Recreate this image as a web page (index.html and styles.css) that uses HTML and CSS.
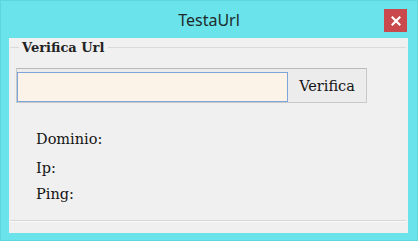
FILE: index.html
```html
<!DOCTYPE html>
<html lang="it">
<head>
  <meta charset="UTF-8" />
  <title>TestaUrl</title>
  <link rel="stylesheet" href="styles.css">
</head>
<body>
  <div class="window">
    <div class="titlebar">
      <span></span>
      <span class="title">TestaUrl</span>
      <button class="close-btn" title="Chiudi">
        <svg width="10" height="10" viewBox="0 0 10 10">
          <path d="M1.5 1.5 L8.5 8.5 M8.5 1.5 L1.5 8.5" stroke="#fff" stroke-width="2.2" stroke-linecap="square" />
        </svg>
      </button>
    </div>

    <div class="client">
      <fieldset class="groupbox">
        <legend>Verifica Url</legend>

        <div class="url-row">
          <input type="text" class="url-input" />
          <button class="check-btn">Verifica</button>
        </div>

        <div class="results">
          <div class="result dominio">Dominio:</div>
          <div class="result ip">Ip:</div>
          <div class="result ping">Ping:</div>
        </div>
      </fieldset>
    </div>
  </div>
</body>
</html>
```

FILE: styles.css
```css
/* finestra stile Windows 8 */
body {
  margin: 0;
  background-color: #6ae4ea;
  font-family: "DejaVu Serif", serif;
  color: #141414;
}

.window {
  width: 418px;
  height: 241px;
  box-sizing: border-box;
  border: 1px solid #5fd6dd;
  display: flex;
  flex-direction: column;
  background-color: #6ae4ea;
}

.titlebar {
  height: 37px;
  display: grid;
  grid-template-columns: 1fr auto 1fr;
  align-items: start;
}

.title {
  font-family: "Noto Sans", sans-serif;
  font-size: 16px;
  color: #1f2a2b;
  margin-top: 8px;
}

.close-btn {
  justify-self: end;
  width: 23px;
  height: 23px;
  margin: 8px 10px 0 0;
  padding: 0;
  border: none;
  background-color: #c9494c;
  display: flex;
  align-items: center;
  justify-content: center;
}

.client {
  flex: 1;
  margin: 0 9px 7px 8px;
  background-color: #f0f0f0;
  padding: 2px 2px 0 1px;
}

.groupbox {
  margin: 0;
  padding: 0 0 0 6px;
  height: 181px;
  box-sizing: border-box;
  border: none;
  border-top: 1px solid #d8dcd8;
  border-bottom: 1px solid #d6d6d6;
  box-shadow: 0 1px 0 #fafafa;
}

.groupbox legend {
  padding: 0 4px 0 3px;
  margin-left: 3px;
  font-weight: bold;
  font-size: 13px;
  color: #222;
}

.url-row {
  display: flex;
  width: 349px;
  margin-top: 13px;
  padding-top: 3px;
  border: 1px solid #c8c8c8;
  border-top-color: #b9b9b9;
  background-color: #ececec;
}

.url-input {
  width: 271px;
  height: 30px;
  box-sizing: border-box;
  margin: 0;
  border: 1px solid #7fa4dc;
  background-color: #fbf2e8;
  outline: none;
}

.check-btn {
  flex: 1;
  height: 30px;
  margin: 0;
  border: none;
  background-color: #ececec;
  font-family: "DejaVu Serif", serif;
  font-size: 14.5px;
  color: #141414;
  padding: 0 0 2px 0;
}

.results {
  padding-left: 20px;
  margin-top: 28px;
  font-size: 14.5px;
}

.result {
  height: 18px;
}

.ip {
  margin-top: 11px;
}

.ping {
  margin-top: 8px;
}
```
